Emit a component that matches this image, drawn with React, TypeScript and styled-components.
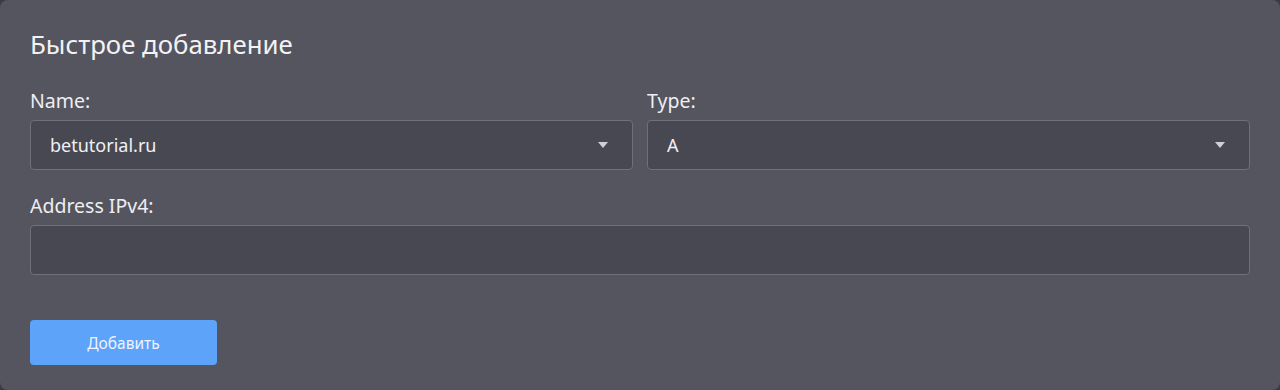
import React from 'react';
import styled, { createGlobalStyle } from 'styled-components';

const GlobalStyle = createGlobalStyle`
  html, body {
    margin: 0;
    padding: 0;
    background: #3b3b43;
  }
  body {
    font-family: "Noto Sans", "Open Sans", sans-serif;
  }
`;

const Card = styled.div`
  box-sizing: border-box;
  width: 1280px;
  height: 390px;
  background: #55555f;
  border-radius: 8px;
  padding: 27px 30px 0 30px;
  color: #f2f2f5;
`;

const Title = styled.h3`
  margin: 0 0 28px;
  font-size: 25.8px;
  font-weight: 400;
  line-height: 34px;
`;

const Row = styled.div`
  display: grid;
  grid-template-columns: 1fr 1fr;
  column-gap: 14px;
  margin-bottom: 24px;
`;

const Field = styled.div`
  display: flex;
  flex-direction: column;
`;

const Label = styled.label`
  font-size: 19.5px;
  line-height: 24px;
  margin-bottom: 7px;
  color: #eeeef2;
`;

const Box = styled.div`
  box-sizing: border-box;
  height: 50px;
  display: flex;
  align-items: center;
  justify-content: space-between;
  padding: 0 24px 0 19px;
  background: #484852;
  border: 1px solid #70707a;
  border-radius: 4px;
  font-size: 18px;
  color: #f0f0f4;
`;

const Caret = styled.span`
  width: 0;
  height: 0;
  border-left: 5px solid transparent;
  border-right: 5px solid transparent;
  border-top: 6px solid #cfcfd6;
`;

const Button = styled.button`
  margin-top: 45px;
  width: 187px;
  height: 45px;
  border: none;
  border-radius: 4px;
  background: #5ea3fa;
  color: #eef4ff;
  font-family: "Noto Sans", "Open Sans", sans-serif;
  font-size: 15.5px;
`;

export default function App() {
  return (
    <>
      <GlobalStyle />
      <Card>
        <Title>Быстрое добавление</Title>
        <Row>
          <Field>
            <Label>Name:</Label>
            <Box>
              <span>betutorial.ru</span>
              <Caret />
            </Box>
          </Field>
          <Field>
            <Label>Type:</Label>
            <Box>
              <span>A</span>
              <Caret />
            </Box>
          </Field>
        </Row>
        <Field>
          <Label>Address IPv4:</Label>
          <Box />
        </Field>
        <Button>Добавить</Button>
      </Card>
    </>
  );
}
